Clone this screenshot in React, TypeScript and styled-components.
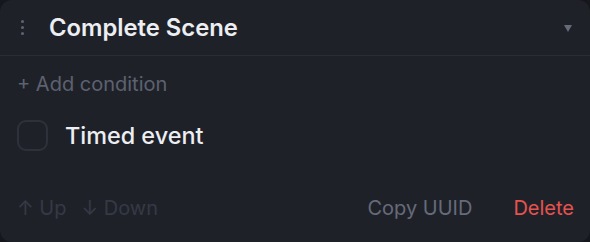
import React, { useState } from 'react';
import styled, { createGlobalStyle } from 'styled-components';

const GlobalStyle = createGlobalStyle`
  html, body {
    margin: 0;
    padding: 0;
    background: #15171c;
  }
  * {
    box-sizing: border-box;
  }
`;

export default function App() {
  const [checked, setChecked] = useState(false);

  return (
    <>
      <GlobalStyle />
      <Card>
        <Header>
          <DragHandle>
            <Dot />
            <Dot />
            <Dot />
          </DragHandle>
          <Title>Complete Scene</Title>
          <Caret />
        </Header>
        <Body>
          <AddCondition>+ Add condition</AddCondition>
          <ConditionRow>
            <Checkbox checked={checked} onClick={() => setChecked(!checked)} />
            <ConditionLabel>Timed event</ConditionLabel>
          </ConditionRow>
        </Body>
        <Footer>
          <MoveGroup>
            <FooterButton tone="disabled">↑ Up</FooterButton>
            <FooterButton tone="disabled">↓ Down</FooterButton>
          </MoveGroup>
          <ActionGroup>
            <FooterButton tone="muted">Copy UUID</FooterButton>
            <FooterButton tone="danger">Delete</FooterButton>
          </ActionGroup>
        </Footer>
      </Card>
    </>
  );
}

const Card = styled.div`
  width: 590px;
  height: 242px;
  background: #1f2129;
  border-radius: 12px;
  display: flex;
  flex-direction: column;
  font-family: Inter, 'Liberation Sans', sans-serif;
  overflow: hidden;
`;

const Header = styled.div`
  height: 56px;
  display: flex;
  align-items: center;
  padding: 0 17px 0 17px;
  border-bottom: 1px solid #2a2d36;
`;

const DragHandle = styled.div`
  width: 8px;
  display: flex;
  flex-direction: column;
  align-items: center;
  gap: 3px;
  margin-left: 1px;
  margin-right: 23px;
`;

const Dot = styled.span`
  width: 3px;
  height: 3px;
  border-radius: 50%;
  background: #5e6372;
`;

const Title = styled.div`
  flex: 1;
  font-size: 23.8px;
  font-weight: 600;
  color: #eceef2;
  margin-top: -1px;
`;

const Caret = styled.span`
  width: 0;
  height: 0;
  border-left: 4px solid transparent;
  border-right: 4px solid transparent;
  border-top: 7px solid #666b79;
  margin-right: 1px;
  margin-top: 2px;
`;

const Body = styled.div`
  flex: 1;
  padding: 14px 17px 0;
  display: flex;
  flex-direction: column;
`;

const AddCondition = styled.button`
  align-self: flex-start;
  background: none;
  border: none;
  padding: 0;
  font-family: inherit;
  font-size: 20px;
  color: #5d6270;
  cursor: pointer;
  line-height: 28px;
`;

const ConditionRow = styled.div`
  display: flex;
  align-items: center;
  gap: 17px;
  margin-top: 22px;
`;

const Checkbox = styled.span<{ checked: boolean }>`
  width: 31px;
  height: 31px;
  border-radius: 9px;
  border: 2px solid #2e313b;
  background: ${({ checked }) => (checked ? '#3b82f6' : 'transparent')};
  cursor: pointer;
`;

const ConditionLabel = styled.span`
  font-size: 23.4px;
  font-weight: 500;
  color: #eceef2;
`;

const Footer = styled.div`
  height: 66px;
  display: flex;
  align-items: center;
  justify-content: space-between;
  padding: 0 16px 2px 17px;
`;

const MoveGroup = styled.div`
  display: flex;
  gap: 15px;
`;

const ActionGroup = styled.div`
  display: flex;
  gap: 41px;
`;

const toneColors = {
  disabled: '#353945',
  muted: '#666b79',
  danger: '#e5534f',
};

const FooterButton = styled.button<{ tone: keyof typeof toneColors }>`
  background: none;
  border: none;
  padding: 0;
  font-family: inherit;
  font-size: 20px;
  color: ${({ tone }) => toneColors[tone]};
  cursor: ${({ tone }) => (tone === 'disabled' ? 'default' : 'pointer')};
`;
